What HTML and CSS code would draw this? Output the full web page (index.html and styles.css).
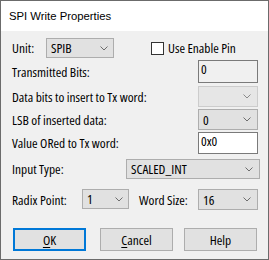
FILE: index.html
```html
<!DOCTYPE html>
<html>
<head>
<meta charset="utf-8">
<link rel="stylesheet" href="styles.css">
</head>
<body>
<div class="window">
  <div class="titlebar">SPI Write Properties</div>
  <div class="content">
    <div class="row r1">
      <span class="lbl lbl-unit">Unit:</span>
      <div class="select sel-unit"><span class="val">SPIB</span><svg class="chev" width="8" height="5" viewBox="0 0 8 5"><polyline points="0.5,0.5 4,4 7.5,0.5" fill="none" stroke="#6d6d6d" stroke-width="1"/></svg></div>
      <div class="check"><span class="box"></span><span class="check-lbl">Use Enable Pin</span></div>
    </div>
    <div class="row r2">
      <span class="lbl grow">Transmitted Bits:</span>
      <div class="edit readonly">0</div>
    </div>
    <div class="row r3">
      <span class="lbl grow">Data bits to insert to Tx word:</span>
      <div class="select disabled sel-right"><span class="val"></span><svg class="chev" width="8" height="5" viewBox="0 0 8 5"><polyline points="0.5,0.5 4,4 7.5,0.5" fill="none" stroke="#8a8a8a" stroke-width="1"/></svg></div>
    </div>
    <div class="row r4">
      <span class="lbl grow">LSB of inserted data:</span>
      <div class="select sel-right"><span class="val">0</span><svg class="chev" width="8" height="5" viewBox="0 0 8 5"><polyline points="0.5,0.5 4,4 7.5,0.5" fill="none" stroke="#6d6d6d" stroke-width="1"/></svg></div>
    </div>
    <div class="row r5">
      <span class="lbl grow">Value ORed to Tx word:</span>
      <div class="edit">0x0</div>
    </div>
    <div class="row r6">
      <span class="lbl grow">Input Type:</span>
      <div class="select sel-type"><span class="val">SCALED_INT</span><svg class="chev" width="8" height="5" viewBox="0 0 8 5"><polyline points="0.5,0.5 4,4 7.5,0.5" fill="none" stroke="#6d6d6d" stroke-width="1"/></svg></div>
    </div>
    <div class="row r7">
      <span class="lbl lbl-radix">Radix Point:</span>
      <div class="select sel-radix"><span class="val">1</span><svg class="chev" width="8" height="5" viewBox="0 0 8 5"><polyline points="0.5,0.5 4,4 7.5,0.5" fill="none" stroke="#6d6d6d" stroke-width="1"/></svg></div>
      <span class="lbl lbl-word">Word Size:</span>
      <div class="select sel-word"><span class="val">16</span><svg class="chev" width="8" height="5" viewBox="0 0 8 5"><polyline points="0.5,0.5 4,4 7.5,0.5" fill="none" stroke="#6d6d6d" stroke-width="1"/></svg></div>
    </div>
    <div class="row r8">
      <div class="btn btn-ok"><span class="u">O</span>K</div>
      <div class="btn btn-cancel"><span class="u">C</span>ancel</div>
      <div class="btn btn-help">Help</div>
    </div>
  </div>
</div>
</body>
</html>
```

FILE: styles.css
```css
html, body {
  margin: 0;
  padding: 0;
}
body {
  width: 269px;
  height: 260px;
  background: #f0f0f0;
}
.window {
  box-sizing: border-box;
  width: 269px;
  height: 260px;
  border: 1px solid #6b6b6b;
  background: #f0f0f0;
  display: flex;
  flex-direction: column;
}
.titlebar {
  height: 30px;
  line-height: 30px;
  background: #ffffff;
  padding-left: 8px;
  font-family: "Liberation Sans", Arial, sans-serif;
  font-size: 11.3px;
  color: #000;
}
.content {
  padding-left: 11px;
  font-family: "Open Sans", sans-serif;
  font-stretch: 75%;
  font-weight: 400;
  font-size: 13.4px;
  color: #000;
  display: flex;
  flex-direction: column;
}
.row {
  display: flex;
  align-items: center;
}
.r1 { margin-top: 7px; height: 20px; }
.r2 { margin-top: 2px; height: 23px; }
.r3 { margin-top: 3px; height: 21px; }
.r4 { margin-top: 2px; height: 21px; }
.r5 { margin-top: 2px; height: 22px; }
.r6 { margin-top: 5px; height: 20px; }
.r7 { margin-top: 10px; height: 21px; align-items: flex-start; }
.r8 { margin-top: 18px; height: 23px; }

.lbl { white-space: nowrap; }
.grow { flex: 1; }
.lbl-unit { width: 34px; }
.lbl-radix { width: 70px; align-self: center; }
.lbl-word { width: 59px; margin-left: 10px; align-self: center; }

.select {
  box-sizing: border-box;
  height: 100%;
  background: #e1e1e1;
  border: 1px solid #adadad;
  display: flex;
  align-items: center;
  padding: 0 5px 0 4px;
}
.select .val { flex: 1; white-space: nowrap; }
.select .chev { display: block; flex: none; }
.select.disabled {
  background: #e6e6e6;
  border-color: #cccccc;
}
.sel-unit { width: 68px; }
.sel-right { width: 60px; margin-right: 10px; }
.sel-right .chev { margin-right: 1px; }
.sel-type { width: 134px; margin-right: 8px; }
.sel-type .chev { margin-right: 1px; }
.sel-radix { width: 47px; height: 20px; }
.sel-word { width: 60px; height: 21px; }
.sel-word .chev { margin-right: 1px; }

.check {
  display: flex;
  align-items: center;
  margin-left: 37px;
}
.check .box {
  box-sizing: border-box;
  width: 13px;
  height: 13px;
  border: 1px solid #333333;
  background: #ffffff;
  margin-right: 4px;
}
.check-lbl { white-space: nowrap; }

.edit {
  box-sizing: border-box;
  width: 60px;
  height: 100%;
  border: 1px solid #7a7a7a;
  background: #ffffff;
  padding: 1px 2px;
  line-height: 15px;
  margin-right: 10px;
}
.edit.readonly {
  background: #f0f0f0;
}

.btn {
  box-sizing: border-box;
  width: 73px;
  height: 23px;
  background: #e1e1e1;
  border: 1px solid #adadad;
  display: flex;
  align-items: center;
  justify-content: center;
}
.btn-ok {
  margin-left: 1px;
  border: 2px solid #0078d7;
}
.btn-cancel { margin-left: 14px; }
.btn-help { margin-left: 11px; }
.u { text-decoration: underline; text-underline-offset: 2px; }
```
